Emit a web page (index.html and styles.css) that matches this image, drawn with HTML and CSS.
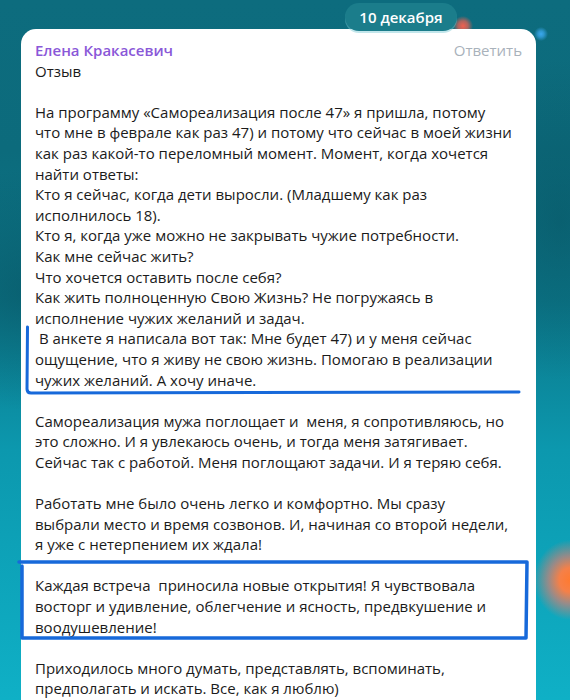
FILE: index.html
```html
<!DOCTYPE html>
<html lang="ru">
<head>
<meta charset="utf-8">
<title>Отзыв</title>
<link rel="stylesheet" href="styles.css">
</head>
<body>
<div class="chat">
  <div class="date-row"><span class="date-pill">10 декабря</span></div>
  <div class="card">
    <div class="head">
      <span class="name">Елена Кракасевич</span>
      <span class="reply">Ответить</span>
    </div>
    <div class="text">
      <p>Отзыв</p>
      <p>На программу «Самореализация после 47» я пришла, потому<br>что мне в феврале как раз 47) и потому что сейчас в моей жизни<br>как раз какой-то переломный момент. Момент, когда хочется<br>найти ответы:<br>Кто я сейчас, когда дети выросли. (Младшему как раз<br>исполнилось 18).<br>Кто я, когда уже можно не закрывать чужие потребности.<br>Как мне сейчас жить?<br>Что хочется оставить после себя?<br>Как жить полноценную Свою Жизнь? Не погружаясь в<br>исполнение чужих желаний и задач.<br>&nbsp;В анкете я написала вот так: Мне будет 47) и у меня сейчас<br>ощущение, что я живу не свою жизнь. Помогаю в реализации<br>чужих желаний. А хочу иначе.</p>
      <p>Самореализация мужа поглощает и &nbsp;меня, я сопротивляюсь, но<br>это сложно. И я увлекаюсь очень, и тогда меня затягивает.<br>Сейчас так с работой. Меня поглощают задачи. И я теряю себя.</p>
      <p>Работать мне было очень легко и комфортно. Мы сразу<br>выбрали место и время созвонов. И, начиная со второй недели,<br>я уже с нетерпением их ждала!</p>
      <p>Каждая встреча &nbsp;приносила новые открытия! Я чувствовала<br>восторг и удивление, облегчение и ясность, предвкушение и<br>воодушевление!</p>
      <p>Приходилось много думать, представлять, вспоминать,<br>предполагать и искать. Все, как я люблю)</p>
    </div>
    <svg class="marks" width="515" height="680" viewBox="0 0 515 680" aria-hidden="true">
      <path d="M6.5 298 L6 360 Q6 364 10 364 L498 363" fill="none" stroke="#1769da" stroke-width="3" stroke-linecap="round" stroke-linejoin="round"/>
      <path d="M-2 533 L506 533 L505 609 L1 609 L1 537" fill="none" stroke="#1769da" stroke-width="3.5" stroke-linecap="round" stroke-linejoin="round"/>
    </svg>
  </div>
</div>
</body>
</html>
```

FILE: styles.css
```css
html, body {
  margin: 0;
  padding: 0;
}
body {
  width: 570px;
  height: 700px;
  overflow: hidden;
  font-family: "Open Sans", "Noto Sans", sans-serif;
  background:
    radial-gradient(ellipse 36px 40px at 570px 580px, #ff7a30 0, #f58048 30%, rgba(225,125,110,0.65) 60%, rgba(20,160,180,0) 100%),
    radial-gradient(circle at 463px 26px, #f06050 0, rgba(240,96,80,0.7) 5px, rgba(240,96,80,0) 10px),
    radial-gradient(circle at 541px 34px, #3aa8ee 0, rgba(58,168,238,0.7) 3px, rgba(58,168,238,0) 7px),
    radial-gradient(ellipse 140px 120px at 30px 290px, rgba(8,80,95,0.55), rgba(8,80,95,0)),
    radial-gradient(ellipse 120px 160px at 560px 220px, rgba(8,80,95,0.5), rgba(8,80,95,0)),
    linear-gradient(180deg, #0d6c7e 0px, #0c6b7c 150px, #0b7688 300px, #0c98ae 450px, #0fb0c6 700px);
}
.chat {
  display: flex;
  flex-direction: column;
}
.date-row {
  display: flex;
  padding: 3px 0 0 345px;
  margin-bottom: -2px;
  position: relative;
  z-index: 2;
}
.date-pill {
  display: inline-block;
  width: 112px;
  height: 28px;
  line-height: 28px;
  border-radius: 14px;
  text-align: center;
  color: #ffffff;
  font-size: 15px;
  font-weight: 600;
  background: #1b7d8b;
  box-shadow: 0 2px 0 rgba(120,200,210,0.45);
}
.card {
  position: relative;
  margin-left: 21px;
  width: 515px;
  box-sizing: border-box;
  background: #ffffff;
  border-radius: 15px 15px 0 0;
  padding: 11px 14px 20px 14px;
  height: 700px;
}
.head {
  display: flex;
  justify-content: space-between;
  align-items: baseline;
  font-size: 15px;
  line-height: 20.6px;
}
.name {
  color: #8a58d8;
  font-weight: 600;
}
.reply {
  color: #a9b2bb;
}
.text {
  font-size: 15px;
  line-height: 20.6px;
  color: #1b1b1b;
}
.text p {
  margin: 0 0 20.6px 0;
  white-space: nowrap;
}
.marks {
  position: absolute;
  left: 0;
  top: 0;
  overflow: visible;
  pointer-events: none;
}
```
